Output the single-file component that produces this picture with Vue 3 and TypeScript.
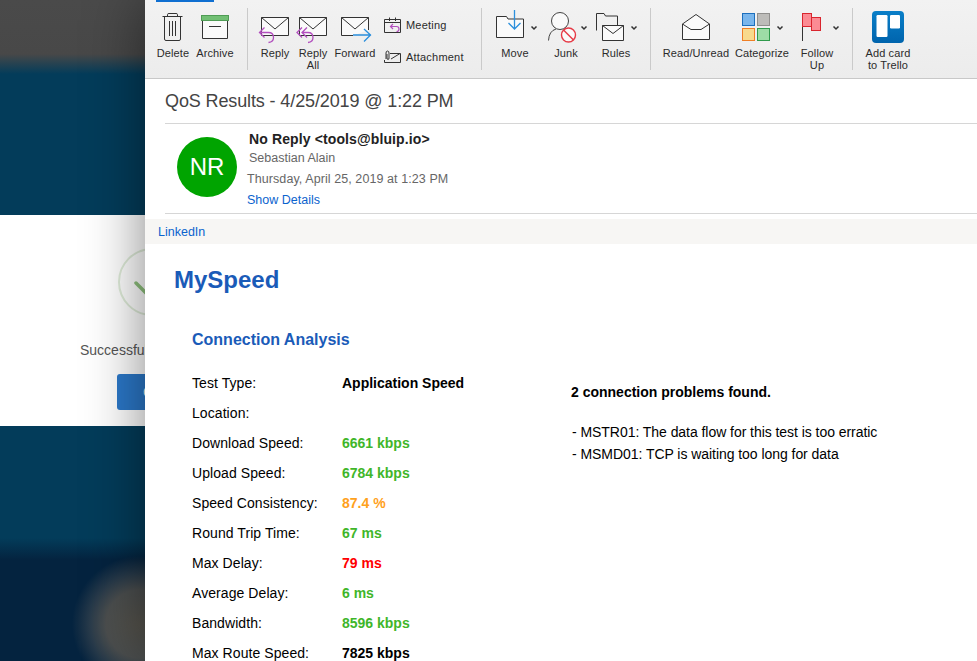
<script setup lang="ts">
interface Metric { label: string; value: string; tone: string }
const metrics: Metric[] = [
  { label: 'Test Type:', value: 'Application Speed', tone: 'plain' },
  { label: 'Location:', value: '', tone: 'plain' },
  { label: 'Download Speed:', value: '6661 kbps', tone: 'good' },
  { label: 'Upload Speed:', value: '6784 kbps', tone: 'good' },
  { label: 'Speed Consistency:', value: '87.4 %', tone: 'warn' },
  { label: 'Round Trip Time:', value: '67 ms', tone: 'good' },
  { label: 'Max Delay:', value: '79 ms', tone: 'bad' },
  { label: 'Average Delay:', value: '6 ms', tone: 'good' },
  { label: 'Bandwidth:', value: '8596 kbps', tone: 'good' },
  { label: 'Max Route Speed:', value: '7825 kbps', tone: 'plain' },
]
</script>

<template>
  <div class="screen">
    <aside class="backdrop">
      <div class="band-top"></div>
      <div class="band-dialog">
        <div class="dialog-stage">
          <svg class="check" viewBox="0 0 68 68" width="68" height="68">
            <circle cx="34" cy="34" r="33" fill="none" stroke="#dfecd9" stroke-width="2" />
            <path d="M18 35 L30 47 L52 24" fill="none" stroke="#8fc27e" stroke-width="3.5" stroke-linecap="round" />
          </svg>
          <p class="dialog-text">Successful</p>
          <button class="dialog-btn">Continue</button>
        </div>
      </div>
      <div class="band-bottom"></div>
    </aside>

    <main class="window">
      <header class="ribbon">
        <span class="tab-mark"></span>

        <div class="rb rb-42">
          <svg viewBox="152 0 42 46" width="42" height="46">
            <g fill="none" stroke="#333" stroke-width="1">
              <path d="M162.5 16.5H182.5M167.5 16V14.5Q167.5 13.5 169 13.5H176Q177.500 13.500 177.500 14.500V16" />
              <path d="M164.500 16.500V39Q164.500 40.500 166 40.500H179Q180.500 40.500 180.500 39V16.500" />
              <path d="M169.500 21V36M172.500 21V36M175.500 21V36" />
            </g>
          </svg>
          <span class="rb-label">Delete</span>
        </div>
        <div class="rb rb-42">
          <svg viewBox="194 0 42 46" width="42" height="46">
            <rect x="201.500" y="15.500" width="27" height="5" fill="#71bf74" stroke="#4f9c55" />
            <path d="M202.500 21V38.500H227.500V21" fill="#fafafa" stroke="#333" />
            <path d="M209 26.500H221" stroke="#333" />
          </svg>
          <span class="rb-label">Archive</span>
        </div>
        <div class="sep sep-a"></div>

        <div class="rb rb-40">
          <svg viewBox="255 0 40 46" width="40" height="46">
            <path d="M261.500 17.500H288.500V35.500H261.500Z" fill="#fafafa" stroke="#333" />
            <path d="M261.500 17.500L275 29L288.500 17.500" fill="none" stroke="#333" />
            <path d="M264.500 27.500L259.500 32.500L264.500 37.500M259.500 32.500H268.500Q273.500 32.500 273.500 37.500Q273.500 42 268.500 42.500" fill="none" stroke="#b24fbe" stroke-width="1.300" />
          </svg>
          <span class="rb-label">Reply</span>
        </div>
        <div class="rb rb-36">
          <svg viewBox="295 0 36 46" width="36" height="46">
            <path d="M299.500 17.500H326.500V35.500H299.500Z" fill="#fafafa" stroke="#333" />
            <path d="M299.500 17.500L313 29L326.500 17.500" fill="none" stroke="#333" />
            <path d="M302 27.500L297 32.500L302 37.500M307 27.500L302 32.500L307 37.500M302 32.500H308Q313 32.500 313 37.500Q313 42 308 42.500" fill="none" stroke="#b24fbe" stroke-width="1.300" />
          </svg>
          <span class="rb-label">Reply<br />All</span>
        </div>
        <div class="rb rb-48">
          <svg viewBox="331 0 48 46" width="48" height="46">
            <path d="M353 35.500H341.500V17.500H368.500V30" fill="#fafafa" stroke="#333" />
            <path d="M341.500 17.500L355 29L368.500 17.500" fill="none" stroke="#333" />
            <path d="M353 35H371M364 29L370.500 35L364 41.500" fill="none" stroke="#2b8fdc" stroke-width="1.300" />
          </svg>
          <span class="rb-label">Forward</span>
        </div>

        <div class="stack">
          <div class="stack-row row-meeting">
            <svg viewBox="0 0 17 16" width="17" height="16">
              <path d="M.500 2.500H16.500V15.500H.500ZM.500 5.500H16.500M5.500 .500V4M11.500 .500V4" fill="none" stroke="#333" />
              <path d="M9 7L6.500 9.500L9 12M6.500 9.500H12.500Q15 9.500 15 12T12.500 14.500" fill="none" stroke="#b24fbe" stroke-width="1.200" />
            </svg>
            <span class="stack-label">Meeting</span>
          </div>
          <div class="stack-row row-attach">
            <svg viewBox="0 0 17 14" width="17" height="14">
              <path d="M6 3.500H16.500V12.500H.500V10" fill="none" stroke="#333" />
              <path d="M7 9L16 3.500" fill="none" stroke="#333" />
              <path d="M2 9V3Q2 1 3.500 1T5 3V8Q5 9.500 4 9.500T3 8V4" fill="none" stroke="#333" />
            </svg>
            <span class="stack-label">Attachment</span>
          </div>
        </div>
        <div class="sep sep-b"></div>

        <div class="rb rb-50">
          <svg viewBox="490 0 50 46" width="50" height="46">
            <path d="M496.500 37.500V16.500H506.500L508 19H523.500V37.500Z" fill="#fafafa" stroke="#333" />
            <path d="M514.500 10V29M508.500 23L514.500 29L520.500 23" fill="none" stroke="#2b8fdc" stroke-width="1.300" />
            <path d="M531.500 26.500L534 29L536.500 26.500" fill="none" stroke="#333" stroke-width="1.500" />
          </svg>
          <span class="rb-label">Move</span>
        </div>
        <div class="rb rb-50 rb-junk">
          <svg viewBox="541 0 50 46" width="50" height="46">
            <circle cx="560" cy="21" r="8.500" fill="#fafafa" stroke="#444" />
            <path d="M548.500 40.500Q549 31 556 29M564 29Q570 30 572 36" fill="none" stroke="#444" />
            <circle cx="568.500" cy="35" r="7" fill="#fafafa" stroke="#e63a46" stroke-width="1.400" />
            <path d="M563.500 30L573.500 40" stroke="#e63a46" stroke-width="1.400" />
            <path d="M581.500 26.500L584 29L586.500 26.500" fill="none" stroke="#333" stroke-width="1.500" />
          </svg>
          <span class="rb-label">Junk</span>
        </div>
        <div class="rb rb-50">
          <svg viewBox="591 0 50 46" width="50" height="46">
            <path d="M596.500 30.500V13.500H604L605.500 16H617.500V25" fill="none" stroke="#333" />
            <path d="M602.500 25.500H623.500V40.500H602.500Z" fill="#fafafa" stroke="#333" />
            <path d="M602.500 25.500L613 33.500L623.500 25.500" fill="none" stroke="#333" />
            <path d="M631.500 26.500L634 29L636.500 26.500" fill="none" stroke="#333" stroke-width="1.500" />
          </svg>
          <span class="rb-label">Rules</span>
        </div>
        <div class="sep sep-c"></div>

        <div class="rb rb-72">
          <svg viewBox="660 0 72 46" width="72" height="46">
            <path d="M682.500 24L696 14.500L709.500 24V39.500H682.500Z" fill="#fafafa" stroke="#333" />
            <path d="M682.500 24L691 29.500H701L709.500 24" fill="none" stroke="#333" />
          </svg>
          <span class="rb-label">Read/Unread</span>
        </div>
        <div class="rb rb-60">
          <svg viewBox="732 0 60 46" width="60" height="46">
            <rect x="742.500" y="13.500" width="12" height="12" fill="#7ab6ec" stroke="#1c6fbd" />
            <rect x="757.500" y="13.500" width="12" height="12" fill="#bdbcb9" stroke="#908f8d" />
            <rect x="742.500" y="28.500" width="12" height="12" fill="#f8da8c" stroke="#ef7f26" />
            <rect x="757.500" y="28.500" width="12" height="12" fill="#9ddca6" stroke="#2f9a4c" />
            <path d="M777.500 26.500L780 29L782.500 26.500" fill="none" stroke="#333" stroke-width="1.500" />
          </svg>
          <span class="rb-label">Categorize</span>
        </div>
        <div class="rb rb-50">
          <svg viewBox="792 0 50 46" width="50" height="46">
            <path d="M802.500 13V41" stroke="#333" />
            <rect x="802.500" y="13.500" width="9" height="13" fill="#fb8b93" stroke="#d9252e" />
            <rect x="811.500" y="17.500" width="9" height="13" fill="#fb8b93" stroke="#d9252e" />
            <path d="M833.500 26.500L836 29L838.500 26.500" fill="none" stroke="#333" stroke-width="1.500" />
          </svg>
          <span class="rb-label">Follow<br />Up</span>
        </div>
        <div class="sep sep-d"></div>

        <div class="rb rb-52">
          <svg viewBox="862 0 52 46" width="52" height="46">
            <defs>
              <linearGradient id="trello" x1="0" y1="0" x2="0" y2="1">
                <stop offset="0" stop-color="#0a7fc8" />
                <stop offset="1" stop-color="#0064ad" />
              </linearGradient>
            </defs>
            <rect x="872" y="11" width="32" height="32" rx="4" fill="url(#trello)" />
            <rect x="876.500" y="15" width="11" height="22" rx="1.200" fill="#fff" />
            <rect x="890" y="15" width="10" height="13.500" rx="1.200" fill="#fff" />
          </svg>
          <span class="rb-label">Add card<br />to Trello</span>
        </div>
      </header>

      <div class="subject">QoS Results - 4/25/2019 @ 1:22 PM</div>

      <section class="sender">
        <div class="avatar">NR</div>
        <div class="sender-text">
          <div class="from">No Reply &lt;tools@bluip.io&gt;</div>
          <div class="to">Sebastian Alain</div>
          <div class="date">Thursday, April 25, 2019 at 1:23 PM</div>
          <a class="details">Show Details</a>
        </div>
      </section>

      <div class="addon-bar"><a class="addon">LinkedIn</a></div>

      <article class="body">
        <h1 class="brand">MySpeed</h1>
        <div class="analysis">
          <h2 class="analysis-title">Connection Analysis</h2>
          <div class="columns">
            <dl class="metrics">
              <template v-for="m in metrics" :key="m.label">
                <dt class="metric-label">{{ m.label }}</dt>
                <dd class="metric-value" :class="m.tone">{{ m.value }}</dd>
              </template>
            </dl>
            <div class="problems">
              <p class="problems-title">2 connection problems found.</p>
              <ul class="problem-list">
                <li>- MSTR01: The data flow for this test is too erratic</li>
                <li>- MSMD01: TCP is waiting too long for data</li>
              </ul>
            </div>
          </div>
        </div>
      </article>
    </main>
  </div>
</template>

<style>
html, body { margin: 0; overflow: hidden; background: #fff; }
</style>

<style scoped>
.screen {
  width: 977px;
  height: 661px;
  display: flex;
  overflow: hidden;
  font-family: "Liberation Sans", Arial, sans-serif;
}
.backdrop {
  width: 145px;
  flex: none;
  display: flex;
  flex-direction: column;
  overflow: hidden;
}
.band-top {
  height: 215px;
  background: linear-gradient(#4a4a4a 0, #484848 54px, #033c5a 74px, #033c5a 100%);
}
.band-dialog {
  height: 211px;
  background: #fff;
  padding-left: 80px;
}
.dialog-stage {
  width: 144px;
  display: flex;
  flex-direction: column;
  align-items: center;
  padding-top: 33px;
}
.check { flex: none; }
.dialog-text {
  margin: 24px 0 0;
  width: 144px;
  font-size: 14px;
  line-height: 20px;
  color: #555;
  white-space: nowrap;
}
.dialog-btn {
  align-self: flex-start;
  margin: 14px 0 0 37px;
  height: 36px;
  padding: 0 26px;
  border: 0;
  border-radius: 3px;
  background: #2b78c9;
  color: #fff;
  font: 14px "Liberation Sans", Arial, sans-serif;
  white-space: nowrap;
}
.band-bottom {
  flex: 1;
  background:
    radial-gradient(circle 68px at 140px 198px, #55534c 0, #4c4f4f 50%, rgba(58, 70, 80, .65) 75%, rgba(4, 35, 63, 0) 100%),
    linear-gradient(#033c5a 0, #033c5a 112px, #04233f 134px, #04233f 100%);
}

.window {
  flex: 1;
  min-width: 0;
  display: flex;
  flex-direction: column;
  background: #fff;
  position: relative;
  box-shadow: 0 0 56px rgba(0, 0, 0, .48);
}
.ribbon {
  position: relative;
  height: 78px;
  flex: none;
  display: flex;
  align-items: flex-start;
  padding-left: 7px;
  background: linear-gradient(#f2f2f2, #ececec);
  border-bottom: 1px solid #c8c8c8;
}
.tab-mark {
  position: absolute;
  left: 11px;
  top: 0;
  width: 58px;
  height: 2px;
  background: #0f6fd1;
}
.rb {
  flex: none;
  display: flex;
  flex-direction: column;
  align-items: center;
}
.rb svg { display: block; flex: none; }
.rb-36 { width: 36px; }
.rb-40 { width: 40px; }
.rb-42 { width: 42px; }
.rb-48 { width: 48px; }
.rb-50 { width: 50px; }
.rb-52 { width: 52px; }
.rb-60 { width: 60px; }
.rb-72 { width: 72px; }
.rb-junk { margin-left: 1px; }
.rb-label {
  margin-top: 1px;
  font-size: 11px;
  letter-spacing: .1px;
  line-height: 12px;
  color: #2b2b2b;
  text-align: center;
  white-space: nowrap;
}
.sep {
  flex: none;
  width: 1px;
  height: 62px;
  margin-top: 8px;
  background: #cacaca;
}
.sep-a { margin-left: 11px; margin-right: 7px; }
.sep-b { margin-left: 0; margin-right: 8px; }
.sep-c { margin-left: 9px; margin-right: 9px; }
.sep-d { margin-left: 10px; margin-right: 9px; }
.stack {
  flex: none;
  width: 102px;
  padding-left: 5px;
  box-sizing: border-box;
  display: flex;
  flex-direction: column;
}
.stack-row {
  display: flex;
  align-items: center;
  gap: 5px;
  height: 16px;
}
.stack-row svg { display: block; flex: none; }
.row-meeting { margin-top: 17px; }
.row-attach { margin-top: 16px; }
.stack-label {
  font-size: 11px;
  letter-spacing: .2px;
  color: #2b2b2b;
  white-space: nowrap;
}

.subject {
  height: 45px;
  flex: none;
  margin-left: 20px;
  box-sizing: border-box;
  border-bottom: 1px solid #d6d6d6;
  font-size: 18px;
  letter-spacing: -.12px;
  line-height: 44px;
  color: #444;
  white-space: nowrap;
}
.sender {
  height: 90px;
  flex: none;
  box-sizing: border-box;
  margin-left: 20px;
  border-bottom: 1px solid #d6d6d6;
  display: flex;
}
.avatar {
  flex: none;
  width: 60px;
  height: 60px;
  margin: 13px 10px 0 12px;
  border-radius: 50%;
  background: #00a400;
  color: #fff;
  font-size: 24px;
  line-height: 60px;
  text-align: center;
}
.sender-text {
  padding-top: 5px;
  font-size: 12.500px;
  line-height: 20px;
}
.from {
  padding-left: 2px;
  font-size: 14px;
  letter-spacing: .12px;
  font-weight: 700;
  color: #222;
}
.to {
  padding-left: 2px;
  margin-top: -1px;
  color: #666;
}
.date { margin-top: 1px; letter-spacing: .08px; color: #666; }
.details { display: block; margin-top: 1px; color: #0b63ce; }
.addon-bar {
  flex: none;
  margin-top: 5px;
  height: 25px;
  background: #f7f6f4;
  padding-left: 13px;
  font-size: 12.500px;
  line-height: 26px;
}
.addon { color: #0b63ce; }
.body {
  flex: 1;
  min-height: 0;
  overflow: hidden;
  padding-left: 29px;
  color: #000;
}
.brand {
  margin: 21px 0 0;
  font-size: 24px;
  line-height: 30px;
  font-weight: 700;
  color: #1a5bb8;
}
.analysis { padding-left: 18px; }
.analysis-title {
  margin: 33px 0 0;
  font-size: 16px;
  line-height: 24px;
  font-weight: 700;
  color: #1a5bb8;
}
.columns {
  display: grid;
  grid-template-columns: 379px 1fr;
  margin-top: 16px;
}
.metrics {
  margin: 0;
  display: grid;
  grid-template-columns: 150px 1fr;
  grid-auto-rows: 30px;
  font-size: 14px;
  line-height: 30px;
}
.metric-label { margin: 0; letter-spacing: .07px; }
.metric-value { margin: 0; font-weight: 700; }
.good { color: #3fb62a; }
.warn { color: #ffa11c; }
.bad { color: #f00; }
.plain { color: #000; }
.problems { font-size: 14px; }
.problems-title {
  margin: 14px 0 0;
  font-weight: 700;
  line-height: 20px;
}
.problem-list {
  list-style: none;
  margin: 19px 0 0;
  padding: 0 0 0 1px;
  letter-spacing: -.05px;
  line-height: 22px;
}
</style>
